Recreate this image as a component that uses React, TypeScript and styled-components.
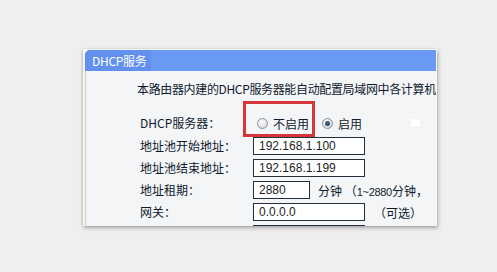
import React from "react";
import styled, { createGlobalStyle } from "styled-components";

const Global = createGlobalStyle`
  html, body { margin: 0; padding: 0; background: #efefef; }
  body { font-family: "Noto Sans CJK SC", "Noto Sans", sans-serif; }
`;

const Page = styled.div`
  width: 497px;
  height: 272px;
  box-sizing: border-box;
  padding: 49px 0 0 83px;
  overflow: hidden;
`;

const Panel = styled.div`
  position: relative;
  width: 354px;
  height: 177px;
  box-sizing: border-box;
  background: #f4f5f7;
  padding: 1px 1px 0 2px;
  display: flex;
  flex-direction: column;
  overflow: hidden;
  box-shadow: 1px 2px 4px rgba(0, 0, 0, 0.3), -1px 0 2px rgba(0, 0, 0, 0.12);
  &::before {
    content: "";
    position: absolute;
    left: 0;
    top: 0;
    width: 6px;
    height: 6px;
    background: #ffffff;
    clip-path: polygon(0 0, 100% 0, 0 100%);
  }
`;

const Header = styled.div`
  height: 21px;
  flex: none;
  background: #6a98f5;
  display: flex;
  align-items: center;
`;

const Title = styled.div`
  height: 21px;
  line-height: 21px;
  padding: 0 5px 0 7px;
  color: #ffffff;
  font-size: 12px;
  background: #6190ee;
  letter-spacing: -0.3px;
`;

const Body = styled.div`
  flex: 1;
  border-left: 1px solid #e7cfa5;
  padding: 10px 0 0 51px;
  overflow: hidden;
`;

const Desc = styled.div`
  font-size: 12px;
  line-height: 16px;
  color: #0f1a2e;
  white-space: nowrap;
  letter-spacing: -0.35px;
  margin-bottom: 14px;
`;

const Form = styled.div`
  display: grid;
  grid-template-columns: 113px 1fr;
  grid-template-rows: 24px repeat(5, 22px);
  margin-left: 3px;
  align-items: center;
`;

const Label = styled.div`
  font-size: 12px;
  line-height: 16px;
  color: #0f1a2e;
  white-space: nowrap;
`;

const Options = styled.div`
  position: relative;
  display: flex;
  align-items: center;
  height: 100%;
`;

const Highlight = styled.div`
  position: absolute;
  left: -10px;
  top: -10px;
  width: 72px;
  height: 36px;
  box-sizing: border-box;
  border: 3px solid #d6353b;
  pointer-events: none;
`;

const Option = styled.label<{ $gapAfter?: number }>`
  display: flex;
  align-items: center;
  font-size: 12px;
  color: #0f1a2e;
  margin-right: ${(p) => p.$gapAfter ?? 0}px;
`;

const Radio = styled.span<{ $checked?: boolean }>`
  position: relative;
  width: 11px;
  height: 11px;
  box-sizing: border-box;
  border-radius: 50%;
  border: 1px solid #8a9099;
  background: radial-gradient(circle at 40% 35%, #ffffff 0%, #e4e4e4 55%, #c9c9c9 100%);
  margin: 0 5px 0 4px;
  &::after {
    content: "";
    display: ${(p) => (p.$checked ? "block" : "none")};
    position: absolute;
    left: 2px;
    top: 2px;
    width: 5px;
    height: 5px;
    border-radius: 50%;
    background: radial-gradient(circle at 40% 35%, #4c6a8c, #1c2f47);
  }
`;

const Ghost = styled.span`
  margin-left: auto;
  margin-right: 16px;
  width: 9px;
  height: 8px;
  background: #ffffff;
  box-shadow: 0 0 1px #e8e8e8;
`;

const Cell = styled.div`
  display: flex;
  align-items: center;
  white-space: nowrap;
`;

const Field = styled.div<{ $w: number }>`
  width: ${(p) => p.$w}px;
  height: 18px;
  box-sizing: border-box;
  border: 1px solid #24303e;
  background: #ffffff;
  padding: 0 5px;
  font-family: "Liberation Sans", Arial, sans-serif;
  font-size: 12px;
  line-height: 16px;
  color: #1e1e1e;
  flex: none;
`;

const Note = styled.span<{ $ml: number }>`
  margin-left: ${(p) => p.$ml}px;
  font-size: 12px;
  color: #0f1a2e;
`;

const Small = styled.span`
  font-family: "Liberation Sans", Arial, sans-serif;
  font-size: 11px;
  letter-spacing: -0.3px;
`;

export default function App() {
  return (
    <>
      <Global />
      <Page>
        <Panel>
          <Header>
            <Title>DHCP服务</Title>
          </Header>
          <Body>
            <Desc>本路由器内建的DHCP服务器能自动配置局域网中各计算机</Desc>
            <Form>
              <Label>DHCP服务器：</Label>
              <Options>
                <Highlight />
                <Option $gapAfter={9}>
                  <Radio />不启用
                </Option>
                <Option>
                  <Radio $checked />启用
                </Option>
                <Ghost />
              </Options>

              <Label>地址池开始地址：</Label>
              <Cell>
                <Field $w={112}>192.168.1.100</Field>
              </Cell>

              <Label>地址池结束地址：</Label>
              <Cell>
                <Field $w={112}>192.168.1.199</Field>
              </Cell>

              <Label>地址租期：</Label>
              <Cell>
                <Field $w={57}>2880</Field>
                <Note $ml={8}>
                  分钟 （<Small>1~2880</Small>分钟，
                </Note>
              </Cell>

              <Label>网关：</Label>
              <Cell>
                <Field $w={112}>0.0.0.0</Field>
                <Note $ml={9}>（可选）</Note>
              </Cell>

              <Label />
              <Cell>
                <Field $w={112} />
              </Cell>
            </Form>
          </Body>
        </Panel>
      </Page>
    </>
  );
}
